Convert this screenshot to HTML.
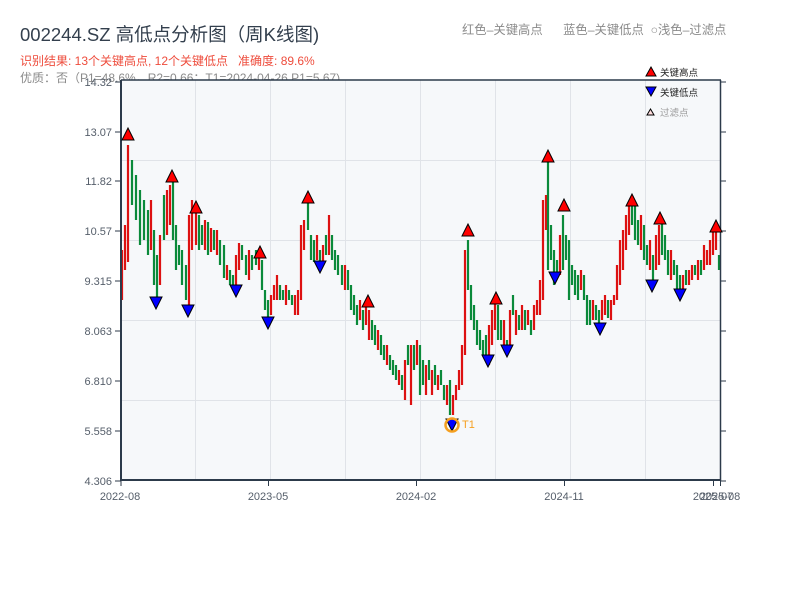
<!DOCTYPE html>
<html><head><meta charset="utf-8">
<style>
body{margin:0;width:800px;height:600px;background:#fff;overflow:hidden;font-family:"Liberation Sans","Noto Sans CJK SC",sans-serif;position:relative}
.t{position:absolute;white-space:nowrap}
</style></head><body>
<div class="t" style="left:20px;top:21px;font-size:18.5px;color:#333f4d">002244.SZ 高低点分析图（周K线图)</div>
<div class="t" style="left:462px;top:20px;font-size:12.3px;color:#8a8a8a">红色–关键高点&nbsp;&nbsp;&nbsp;&nbsp;&nbsp;&nbsp;蓝色–关键低点&nbsp;&nbsp;○浅色–过滤点</div>
<div class="t" style="left:20px;top:52px;font-size:12px;color:#ee4c3c">识别结果: 13个关键高点, 12个关键低点&nbsp;&nbsp;&nbsp;准确度: 89.6%</div>
<div class="t" style="left:20px;top:69px;font-size:12px;color:#8a8a8a">优质：否（P1=48.6%，R2=0.66；T1=2024-04-26 P1=5.67)</div>
<svg width="800" height="600" style="position:absolute;left:0;top:0" xmlns="http://www.w3.org/2000/svg" font-family="Liberation Sans, Noto Sans CJK SC, sans-serif">
<rect x="121" y="80" width="599" height="400" fill="#f6f8fa"/>
<g stroke="#e0e3e8" stroke-width="1">
<line x1="195.5" y1="80" x2="195.5" y2="480"/><line x1="270.5" y1="80" x2="270.5" y2="480"/><line x1="345.5" y1="80" x2="345.5" y2="480"/><line x1="420.5" y1="80" x2="420.5" y2="480"/><line x1="495.5" y1="80" x2="495.5" y2="480"/><line x1="570.5" y1="80" x2="570.5" y2="480"/><line x1="645.5" y1="80" x2="645.5" y2="480"/>
<line x1="121" y1="160.5" x2="720" y2="160.5"/><line x1="121" y1="240.5" x2="720" y2="240.5"/><line x1="121" y1="320.5" x2="720" y2="320.5"/><line x1="121" y1="400.5" x2="720" y2="400.5"/>
</g>
<path stroke="#dd1111" stroke-width="2.2" fill="none" d="M122 250V300M125 225V270M128 145V262M151 200V250M160 235V285M167 190V235M170 185V225M189 215V305M192 200V250M196 212V245M205 220V250M211 228V252M217 230V255M227 265V280M236 255V285M239 243V270M249 250V280M259 250V270M271 295V315M274 285V300M277 275V300M286 285V305M295 295V315M298 290V315M301 225V300M304 220V250M317 235V260M323 245V265M329 215V255M345 265V290M360 300V320M366 305V325M369 310V340M378 330V350M387 345V365M399 370V385M405 360V400M411 345V405M417 340V365M426 365V395M432 370V395M438 375V390M447 385V405M453 395V415M456 385V400M459 370V390M462 345V385M465 250V355M489 325V365M492 310V345M495 300V330M504 320V345M510 310V345M516 310V335M522 305V330M528 310V325M534 305V330M537 300V315M540 280V315M543 200V300M546 195V230M560 235V275M581 270V290M593 300V320M602 300V320M605 295V315M611 300V320M614 295V305M617 265V300M620 240V285M623 230V270M626 215V250M629 205V235M641 215V250M650 240V270M656 235V270M659 225V265M671 250V280M683 275V290M689 270V285M692 265V280M698 260V280M704 245V270M707 250V265M710 240V265M713 230V255M716 226V250"/>
<path stroke="#0a8a3a" stroke-width="2.2" fill="none" d="M132 160V205M136 175V220M140 190V245M144 200V240M148 210V255M154 230V285M157 255V300M164 195V240M173 180V240M176 225V270M179 245V265M182 250V285M186 265V300M199 215V250M202 225V245M208 222V255M214 230V250M220 240V265M224 245V278M230 270V285M233 275V290M242 245V260M246 255V275M252 255V270M256 250V265M262 260V290M265 290V310M268 300V318M280 285V300M283 290V300M289 290V300M292 295V305M308 200V230M311 235V260M314 240V262M320 250V265M326 235V255M332 235V260M335 250V270M338 255V275M342 265V285M348 270V290M351 285V310M354 295V315M357 305V325M363 310V330M372 320V340M375 325V345M381 335V355M384 345V360M390 355V370M393 360V375M396 365V380M402 375V390M408 345V365M414 345V370M420 345V395M423 360V385M429 360V380M435 365V385M441 370V385M444 385V400M450 380V415M468 240V290M471 285V320M474 305V330M477 320V345M480 330V350M483 340V355M486 335V360M498 305V340M501 320V340M507 340V355M513 295V315M519 315V330M525 310V330M531 320V335M548 160V270M551 225V260M554 250V285M557 260V275M563 215V270M566 235V260M569 240V300M572 265V285M575 270V295M578 275V300M584 275V300M587 295V325M590 300V325M596 305V320M599 310V325M608 300V318M632 200V225M635 205V240M638 220V245M644 225V260M647 245V265M653 255V280M662 223V255M665 235V260M668 250V275M674 260V275M677 265V290M680 275V290M686 270V285M695 265V275M701 260V275M719 255V270"/>
<g stroke="#2c3a4a" fill="none">
<line x1="121" y1="80" x2="121" y2="481" stroke-width="2"/>
<line x1="120" y1="480" x2="721" y2="480" stroke-width="2"/>
<line x1="121" y1="80" x2="721" y2="80" stroke-width="1.5"/>
<line x1="720.5" y1="80" x2="720.5" y2="481" stroke-width="1.5"/>
<g stroke-width="1">
<line x1="115" y1="82" x2="121" y2="82"/><line x1="115" y1="132" x2="121" y2="132"/><line x1="115" y1="181" x2="121" y2="181"/><line x1="115" y1="231" x2="121" y2="231"/><line x1="115" y1="281" x2="121" y2="281"/><line x1="115" y1="331" x2="121" y2="331"/><line x1="115" y1="381" x2="121" y2="381"/><line x1="115" y1="431" x2="121" y2="431"/><line x1="115" y1="481" x2="121" y2="481"/>
<line x1="720" y1="82" x2="726" y2="82"/><line x1="720" y1="132" x2="726" y2="132"/><line x1="720" y1="181" x2="726" y2="181"/><line x1="720" y1="231" x2="726" y2="231"/><line x1="720" y1="281" x2="726" y2="281"/><line x1="720" y1="331" x2="726" y2="331"/><line x1="720" y1="381" x2="726" y2="381"/><line x1="720" y1="431" x2="726" y2="431"/><line x1="720" y1="481" x2="726" y2="481"/>
<line x1="121" y1="480" x2="121" y2="486"/><line x1="268.5" y1="480" x2="268.5" y2="486"/><line x1="416.5" y1="480" x2="416.5" y2="486"/><line x1="564.5" y1="480" x2="564.5" y2="486"/><line x1="713.5" y1="480" x2="713.5" y2="486"/><line x1="720.5" y1="480" x2="720.5" y2="486"/>
</g></g>
<g font-size="11" fill="#555e6a" text-anchor="end">
<text x="112" y="86">14.32</text><text x="112" y="136">13.07</text><text x="112" y="185">11.82</text><text x="112" y="235">10.57</text><text x="112" y="285">9.315</text><text x="112" y="335">8.063</text><text x="112" y="385">6.810</text><text x="112" y="435">5.558</text><text x="112" y="485">4.306</text>
</g>
<g font-size="11" fill="#555e6a" text-anchor="middle">
<text x="120" y="500">2022-08</text><text x="268" y="500">2023-05</text><text x="416" y="500">2024-02</text><text x="564" y="500">2024-11</text><text x="713" y="500">2025-07</text><text x="720" y="500">2025-08</text>
</g>
<g fill="#f00" stroke="#000" stroke-width="1">
<polygon points="122,140 128,128 134,140"/><polygon points="166,182 172,170 178,182"/><polygon points="190,213 196,201 202,213"/><polygon points="254,258 260,246 266,258"/><polygon points="302,203 308,191 314,203"/><polygon points="362,307 368,295 374,307"/><polygon points="462,236 468,224 474,236"/><polygon points="490,304 496,292 502,304"/><polygon points="542,162 548,150 554,162"/><polygon points="558,211 564,199 570,211"/><polygon points="626,206 632,194 638,206"/><polygon points="654,224 660,212 666,224"/><polygon points="710,232 716,220 722,232"/>
</g>
<g fill="#00f" stroke="#000" stroke-width="1">
<polygon points="150,297 156,309 162,297"/><polygon points="182,305 188,317 194,305"/><polygon points="230,285 236,297 242,285"/><polygon points="262,317 268,329 274,317"/><polygon points="314,261 320,273 326,261"/><polygon points="446,419 452,431 458,419"/><polygon points="482,355 488,367 494,355"/><polygon points="501,345 507,357 513,345"/><polygon points="549,272 555,284 561,272"/><polygon points="594,323 600,335 606,323"/><polygon points="646,280 652,292 658,280"/><polygon points="674,289 680,301 686,289"/>
</g>
<circle cx="452" cy="425" r="6.5" fill="none" stroke="#f5a020" stroke-width="2.5"/>
<text x="462" y="428" font-size="11" fill="#f5a020">T1</text>
<polygon points="646,76 651,67 656,76" fill="#f00" stroke="#000" stroke-width="1"/>
<text x="660" y="76" font-size="9.5" fill="#222">关键高点</text>
<polygon points="646,87 651,96 656,87" fill="#00f" stroke="#000" stroke-width="1"/>
<text x="660" y="96" font-size="9.5" fill="#222">关键低点</text>
<polygon points="647,115 650.5,109 654,115" fill="#fdd" stroke="#000" stroke-width="1"/>
<text x="660" y="116" font-size="9.5" fill="#999">过滤点</text>
</svg>
</body></html>
